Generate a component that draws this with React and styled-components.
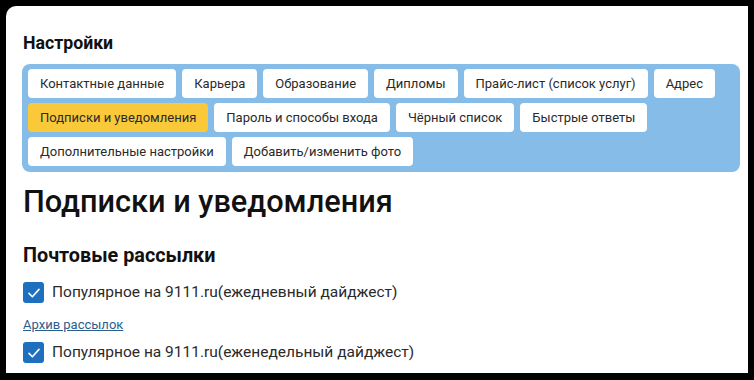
import styled, { createGlobalStyle } from 'styled-components';

const GlobalStyle = createGlobalStyle`
  html, body {
    margin: 0;
    padding: 0;
    background: #000;
  }
  body {
    font-family: Roboto, "Liberation Sans", Arial, sans-serif;
  }
`;

const tabs = [
  'Контактные данные',
  'Карьера',
  'Образование',
  'Дипломы',
  'Прайс-лист (список услуг)',
  'Адрес',
  'Подписки и уведомления',
  'Пароль и способы входа',
  'Чёрный список',
  'Быстрые ответы',
  'Дополнительные настройки',
  'Добавить/изменить фото',
];

const active = 'Подписки и уведомления';

const mailings = [
  { label: 'Популярное на 9111.ru(ежедневный дайджест)', archive: true },
  { label: 'Популярное на 9111.ru(еженедельный дайджест)', archive: false },
];

const CheckIcon = () => (
  <svg width='14' height='14' viewBox='0 0 14 14' fill='none'>
    <path d='M2 7.4 L5.4 10.8 L12 3.4' stroke='#fff' strokeWidth='1.6' strokeLinecap='round' strokeLinejoin='round' />
  </svg>
);

const App = () => {
  return (
    <>
      <GlobalStyle />
      <Frame>
        <Card>
          <Title>Настройки</Title>
          <TabPanel>
            {tabs.map((tab) => (
              <Tab key={tab} $active={tab === active}>
                {tab}
              </Tab>
            ))}
          </TabPanel>
          <Heading>Подписки и уведомления</Heading>
          <SubHeading>Почтовые рассылки</SubHeading>
          <List>
            {mailings.map((item) => (
              <Item key={item.label}>
                <CheckRow>
                  <Box>
                    <CheckIcon />
                  </Box>
                  <Label>{item.label}</Label>
                </CheckRow>
                {item.archive && <ArchiveLink href='#'>Архив рассылок</ArchiveLink>}
              </Item>
            ))}
          </List>
        </Card>
      </Frame>
    </>
  );
};

const Frame = styled.div`
  width: 754px;
  height: 380px;
  padding: 6px 6px 7px 6px;
  box-sizing: border-box;
  background: #000;
`;

const Card = styled.div`
  width: 742px;
  height: 367px;
  background: #fff;
  border-top-left-radius: 10px;
  padding: 27px 8px 0 16px;
  box-sizing: border-box;
  overflow: hidden;
`;

const Title = styled.h2`
  margin: 0 0 0 1px;
  font-size: 17.7px;
  line-height: 20px;
  font-weight: 700;
  color: #111;
`;

const TabPanel = styled.div`
  margin-top: 11px;
  background: #86bde8;
  border-radius: 8px;
  padding: 5px 6px 6px 6px;
  display: flex;
  flex-wrap: wrap;
  gap: 5px 6px;
`;

const Tab = styled.button`
  height: 29px;
  padding: 0 12px;
  border: none;
  border-radius: 4px;
  background: ${(p) => (p.$active ? '#f9c93a' : '#fff')};
  color: #2a2a2a;
  font-family: Roboto, "Liberation Sans", Arial, sans-serif;
  font-size: 13px;
  cursor: pointer;
`;

const Heading = styled.h1`
  margin: 12px 0 0 1px;
  font-size: 30.7px;
  line-height: 36px;
  font-weight: 500;
  color: #111;
`;

const SubHeading = styled.h3`
  margin: 24px 0 0 1px;
  font-size: 19.8px;
  line-height: 24px;
  font-weight: 700;
  color: #111;
`;

const List = styled.div`
  margin-top: 14px;
  display: flex;
  flex-direction: column;
  gap: 10px;
`;

const Item = styled.div`
  display: flex;
  flex-direction: column;
  gap: 14px;
`;

const CheckRow = styled.label`
  display: flex;
  align-items: center;
  gap: 8px;
  height: 21px;
  padding-left: 1px;
`;

const Box = styled.span`
  width: 21px;
  height: 21px;
  border-radius: 3px;
  background: #1f6fbf;
  display: flex;
  align-items: center;
  justify-content: center;
`;

const Label = styled.span`
  font-size: 15.5px;
  line-height: 21px;
  color: #2a2a2a;
`;

const ArchiveLink = styled.a`
  margin-left: 1px;
  font-size: 13px;
  line-height: 15px;
  color: #2b5e8c;
  text-decoration: underline;
  align-self: flex-start;
`;

export default App;
